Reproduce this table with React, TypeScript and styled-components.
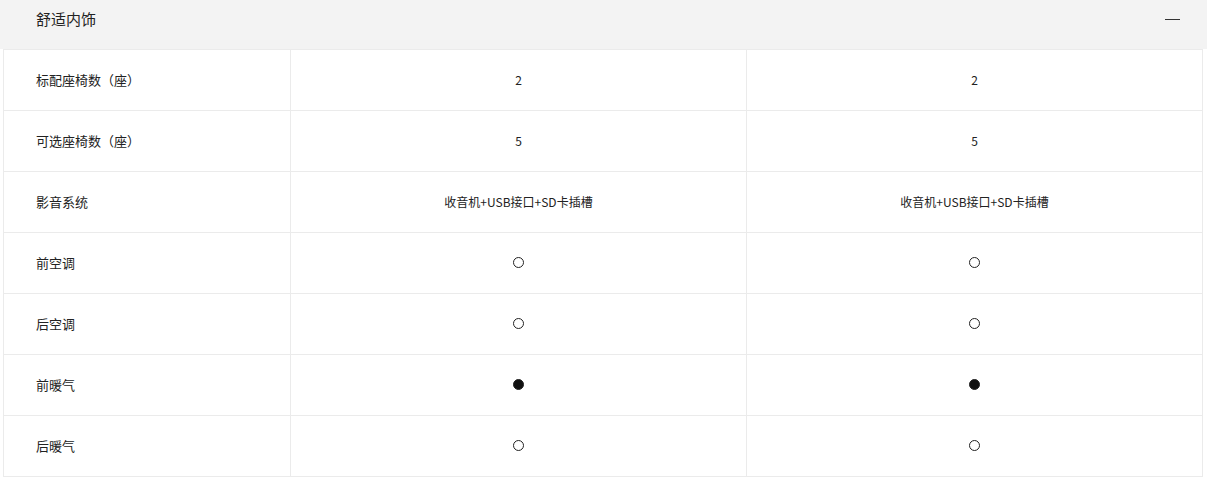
import React from "react";
import styled, { createGlobalStyle } from "styled-components";

const Global = createGlobalStyle`
  html, body { margin: 0; padding: 0; background: #fff; }
  body { font-family: "Noto Sans CJK SC", "Noto Sans", sans-serif; color: #222; }
`;

const Page = styled.div`
  width: 1207px;
`;

const Header = styled.div`
  height: 49px;
  background: #f3f3f3;
  display: flex;
  align-items: flex-start;
  justify-content: space-between;
  padding: 0 27px 0 36px;
  box-sizing: border-box;
`;

const Title = styled.div`
  font-size: 15px;
  line-height: 37px;
  color: #222;
`;

const Collapse = styled.div`
  width: 15px;
  height: 1.5px;
  background: #333;
  margin-top: 18.5px;
`;

const Table = styled.div`
  margin-left: 3px;
  width: 1200px;
  border-left: 1px solid #ebebeb;
  border-top: 1px solid #ebebeb;
  box-sizing: border-box;
`;

const Row = styled.div`
  display: grid;
  grid-template-columns: 287px 456px 456px;
  height: 61px;
  border-bottom: 1px solid #ebebeb;
  box-sizing: border-box;
`;

const Cell = styled.div<{ $label?: boolean }>`
  display: flex;
  align-items: center;
  justify-content: ${(p) => (p.$label ? "flex-start" : "center")};
  padding-left: ${(p) => (p.$label ? "32px" : "0")};
  padding-bottom: 2px;
  border-right: 1px solid #ebebeb;
  font-size: ${(p) => (p.$label ? "13px" : "12px")};
  color: #222;
  box-sizing: border-box;
`;

const Dot = styled.span<{ $filled?: boolean }>`
  display: inline-block;
  width: 11px;
  height: 11px;
  border-radius: 50%;
  box-sizing: border-box;
  border: 1px solid #222;
  background: ${(p) => (p.$filled ? "#111" : "transparent")};
`;

type Val = string | { dot: "open" | "filled" };

const rows: { label: string; values: Val[] }[] = [
  { label: "标配座椅数（座）", values: ["2", "2"] },
  { label: "可选座椅数（座）", values: ["5", "5"] },
  { label: "影音系统", values: ["收音机+USB接口+SD卡插槽", "收音机+USB接口+SD卡插槽"] },
  { label: "前空调", values: [{ dot: "open" }, { dot: "open" }] },
  { label: "后空调", values: [{ dot: "open" }, { dot: "open" }] },
  { label: "前暖气", values: [{ dot: "filled" }, { dot: "filled" }] },
  { label: "后暖气", values: [{ dot: "open" }, { dot: "open" }] },
];

export default function App() {
  return (
    <Page>
      <Global />
      <Header>
        <Title>舒适内饰</Title>
        <Collapse />
      </Header>
      <Table>
        {rows.map((r) => (
          <Row key={r.label}>
            <Cell $label>{r.label}</Cell>
            {r.values.map((v, i) => (
              <Cell key={i}>
                {typeof v === "string" ? v : <Dot $filled={v.dot === "filled"} />}
              </Cell>
            ))}
          </Row>
        ))}
      </Table>
    </Page>
  );
}
